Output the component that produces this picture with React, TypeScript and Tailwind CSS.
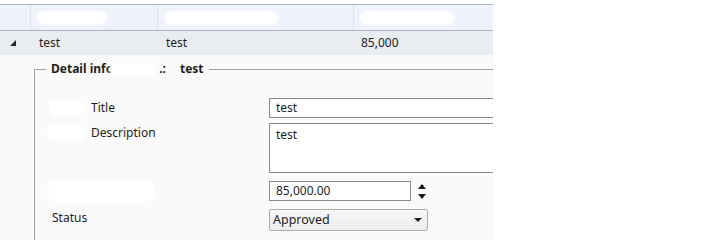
import React from "react";

// white smudges that hide redacted text in the original capture
function Blot({ className }: { className: string }) {
  return <span className={`inline-block bg-white rounded-full blur-[1px] ${className}`} />;
}

function FieldLabel({ children, blot }: { children: React.ReactNode; blot: string }) {
  return (
    <div className="flex items-center h-[20px]">
      <Blot className={blot} />
      <span className="text-[#1e1e1e]">{children}</span>
    </div>
  );
}

export default function App() {
  const columns = [
    { w: "w-[31px]", blot: "" },
    { w: "w-[127px]", blot: "w-[70px] h-[14px] ml-[6px]" },
    { w: "w-[196px]", blot: "w-[115px] h-[14px] ml-[6px]" },
    { w: "flex-1", blot: "w-[95px] h-[14px] ml-[6px]" },
  ];

  return (
    <div
      className="w-[716px] h-[240px] bg-white overflow-hidden text-[12px] text-[#1e1e1e]"
      style={{ fontFamily: '"Noto Sans", "Open Sans", sans-serif' }}
    >
      <div className="w-[493px] h-full pt-[4px] overflow-hidden">
        {/* column header */}
        <div className="flex h-[27px] bg-[#eef2fb] border-t border-b border-[#aab4c6]">
          {columns.map((c, i) => (
            <div
              key={i}
              className={`${c.w} h-full flex items-center ${i < columns.length - 1 ? "border-r border-[#dde3ee]" : ""}`}
            >
              {c.blot && <Blot className={c.blot} />}
            </div>
          ))}
        </div>

        {/* selected row */}
        <div className="flex h-[24px] bg-[#e9ecf1] items-center">
          <div className="w-[31px] flex items-center pl-[10px]">
            <svg width="6" height="6" viewBox="0 0 6 6">
              <polygon points="6,0 6,6 0,6" fill="#262626" />
            </svg>
          </div>
          <div className="w-[127px] pl-[8px]">test</div>
          <div className="w-[196px] pl-[8px]">test</div>
          <div className="flex-1 pl-[7px]">85,000</div>
        </div>

        {/* row details */}
        <div className="bg-[#fafafa] h-full pl-[34px] pt-[6px]">
          <div className="relative border-l border-t border-[#a0a0a0] h-[200px] mt-[8px]">
            <div className="absolute -top-[10px] left-[11px] flex items-center bg-[#fafafa] px-[5px] font-bold h-[18px]">
              <span>Detail info</span>
              <Blot className="w-[48px] h-[13px] -ml-[4px]" />
              <span className="ml-[2px]">.:</span>
              <span className="ml-[14px]">test</span>
            </div>

            <div className="flex pt-[28px]">
              <div className="w-[234px] shrink-0 flex flex-col">
                <FieldLabel blot="w-[36px] h-[15px] ml-[14px] mr-[6px]">Title</FieldLabel>
                <div className="h-[5px]" />
                <FieldLabel blot="w-[38px] h-[15px] ml-[12px] mr-[6px]">Description</FieldLabel>
                <div className="h-[35px]" />
                <div className="flex items-end h-[24px] pl-[12px]">
                  <Blot className="w-[108px] h-[22px]" />
                  <span className="-ml-[40px] mb-[3px] text-[8px] leading-none text-[#333]">- ·</span>
                </div>
                <div className="h-[6px]" />
                <div className="h-[20px] flex items-center pl-[17px]">Status</div>
              </div>

              <div className="flex flex-col flex-1">
                <div className="h-[20px] w-[260px] bg-white border border-[#8a8a8a] flex items-center pl-[6px]">
                  test
                </div>
                <div className="h-[5px]" />
                <div className="h-[50px] w-[260px] bg-white border border-[#8a8a8a] pl-[6px] pt-[2px]">
                  test
                </div>
                <div className="h-[8px]" />
                <div className="flex items-center">
                  <div className="h-[20px] w-[142px] bg-white border border-[#8a8a8a] flex items-center pl-[6px]">
                    85,000.00
                  </div>
                  <div className="flex flex-col gap-[5px] ml-[7px]">
                    <svg width="8" height="5" viewBox="0 0 8 5">
                      <polygon points="4,0 8,5 0,5" fill="#1a1a1a" />
                    </svg>
                    <svg width="8" height="5" viewBox="0 0 8 5">
                      <polygon points="0,0 8,0 4,5" fill="#1a1a1a" />
                    </svg>
                  </div>
                </div>
                <div className="h-[8px]" />
                <div className="h-[22px] w-[159px] rounded-[2px] border border-[#acacac] bg-gradient-to-b from-[#f7f7f7] to-[#ededed] flex items-center justify-between pl-[3px] pr-[5px] text-[12.5px]">
                  <span>Approved</span>
                  <svg width="8" height="4" viewBox="0 0 8 4">
                    <polygon points="0,0 8,0 4,4" fill="#1a1a1a" />
                  </svg>
                </div>
              </div>
            </div>
          </div>
        </div>
      </div>
    </div>
  );
}
